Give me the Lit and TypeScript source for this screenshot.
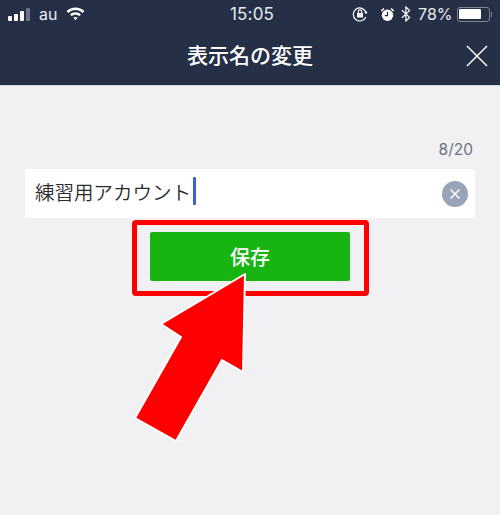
import { LitElement, html, css } from "lit";
import { customElement } from "lit/decorators.js";

@customElement("app-root")
export class AppRoot extends LitElement {
  static styles = css`
    :host {
      display: block;
      position: relative;
      width: 500px;
      height: 515px;
      overflow: hidden;
      background: #f1f1f4;
      font-family: "Inter", "Liberation Sans", "Noto Sans CJK JP", sans-serif;
    }
    .head {
      height: 86px;
      background: #253047;
      color: #fff;
      box-sizing: border-box;
      border-bottom: 1px solid #d5d7de;
    }
    .status {
      height: 28px;
      display: grid;
      grid-template-columns: 1fr auto 1fr;
      align-items: center;
      font-size: 16px;
      color: #e8eaef;
    }
    .left {
      display: flex;
      align-items: center;
      padding-left: 8px;
      gap: 9px;
    }
    .bars {
      display: flex;
      align-items: flex-end;
      gap: 2px;
      height: 13px;
    }
    .bars i {
      display: block;
      width: 4px;
      background: #fff;
      border-radius: 1px;
    }
    .bars i.b1 { height: 5px; }
    .bars i.b2 { height: 7px; }
    .bars i.b3 { height: 10px; }
    .bars i.b4 { height: 13px; background: #6b7384; }
    .time {
      font-size: 17px;
      letter-spacing: 0.2px;
      padding-left: 4px;
    }
    .right {
      display: flex;
      align-items: center;
      justify-content: flex-end;
      padding-right: 8px;
      gap: 5px;
    }
    .right .alarm { margin-left: 7px; }
    .right .bt { margin-left: 1px; }
    .right .pct { font-size: 16px; margin-left: 2px; margin-right: -1px; }
    .battery {
      display: flex;
      align-items: center;
      gap: 1px;
    }
    .battery .shell {
      box-sizing: border-box;
      width: 33px;
      height: 15px;
      border: 1px solid #7d8494;
      border-radius: 3px;
      padding: 1.500px;
      display: flex;
    }
    .battery .fill {
      background: #fff;
      border-radius: 1px;
      height: 100%;
    }
    .battery .cap {
      width: 1.500px;
      height: 5px;
      background: #7d8494;
    }
    .nav {
      position: relative;
      height: 56px;
      display: flex;
      align-items: center;
      justify-content: center;
      font-size: 21px;
      font-weight: 500;
      padding-bottom: 4px;
      box-sizing: border-box;
      font-family: "Noto Sans CJK JP", sans-serif;
    }
    .close {
      position: absolute;
      right: 12px;
      top: 17px;
    }
    .body {
      padding: 53px 25px 0;
    }
    .count {
      text-align: right;
      color: #6e7380;
      font-size: 15.500px;
      line-height: 22px;
      padding-right: 2px;
      height: 30px;
      box-sizing: border-box;
    }
    .field {
      height: 49px;
      background: #fff;
      border-radius: 2px;
      display: flex;
      align-items: center;
      padding: 0 7px 0 10px;
      box-sizing: border-box;
      font-family: "Noto Sans CJK JP", sans-serif;
      font-size: 19.500px;
      font-weight: 350;
      color: #2b2b2b;
    }
    .value { margin-bottom: 4px; }
    .caret {
      width: 2.500px;
      height: 28px;
      background: #3f60c8;
      border-radius: 1px;
      margin-left: 2px;
      margin-bottom: 5px;
    }
    .clear {
      margin-left: auto;
      width: 26px;
      height: 26px;
      border-radius: 50%;
      background: #99a4b8;
      display: flex;
      align-items: center;
      justify-content: center;
    }
    .save {
      margin: 14px auto 0;
      width: 200px;
      height: 49px;
      background: #18b512;
      border-radius: 2px;
      color: #fff;
      display: flex;
      align-items: center;
      justify-content: center;
      font-family: "Noto Sans CJK JP", sans-serif;
      font-size: 20px;
      font-weight: 500;
    }
    .frame {
      position: absolute;
      left: 132px;
      top: 220px;
      width: 237px;
      height: 76px;
      box-sizing: border-box;
      border: 5px solid #fe0000;
      border-radius: 4px;
    }
    .arrow {
      position: absolute;
      left: 0;
      top: 0;
    }
  `;

  render() {
    return html`
      <div class="head">
        <div class="status">
          <div class="left">
            <div class="bars"><i class="b1"></i><i class="b2"></i><i class="b3"></i><i class="b4"></i></div>
            <span>au</span>
            <svg width="19" height="14" viewBox="0 0 19 14">
              <path d="M9.500 0.500C6 0.500 3 1.800 0.600 4.100L2.400 6C4.300 4.200 6.800 3.100 9.500 3.100s5.200 1.100 7.100 2.900l1.800-1.900C16 1.800 13 0.500 9.500 0.500z" fill="#fff"/>
              <path d="M9.500 5.200c-2.100 0-4 .8-5.400 2.200l1.800 1.800c1-.9 2.200-1.400 3.600-1.400s2.600.5 3.600 1.400l1.800-1.800C13.500 6 11.600 5.200 9.500 5.200z" fill="#fff"/>
              <path d="M9.500 10c-.9 0-1.500.3-2.100.8l2.100 2.400 2.100-2.400c-.6-.5-1.200-.8-2.100-.8z" fill="#fff"/>
            </svg>
          </div>
          <div class="time">15:05</div>
          <div class="right">
            <svg width="16" height="16" viewBox="0 0 16 16" fill="none" stroke="#fff">
              <path d="M14 6.500A6.500 6.500 0 1 0 13.800 11" stroke-width="1.200"/>
              <path d="M12.200 5.800h3.400L14 8.200z" fill="#fff" stroke="none"/>
              <rect x="5" y="7" width="6" height="4.600" rx=".6" fill="#fff" stroke="none"/>
              <path d="M6.300 7V5.600a1.700 1.700 0 0 1 3.400 0V7" stroke-width="1.100"/>
            </svg>
            <svg width="15" height="15" viewBox="0 0 15 15" class="alarm">
              <circle cx="7.500" cy="8.300" r="5.700" fill="#fff"/>
              <path d="M7.500 4.800v3.800H4.800" fill="none" stroke="#253047" stroke-width="1.200"/>
              <path d="M.8 3.400L3.400 .9l1 1L1.800 4.400zM14.200 3.400L11.600 .9l-1 1 2.600 2.500z" fill="#fff"/>
            </svg>
            <svg class="bt" width="10" height="16" viewBox="0 0 10 16" fill="none" stroke="#fff" stroke-width="1.200">
              <path d="M1 4.200l7.600 7.200L4.900 15V1l3.700 3.600L1 11.800"/>
            </svg>
            <span class="pct">78%</span>
            <div class="battery">
              <div class="shell"><div class="fill" style="width:78%"></div></div>
              <div class="cap"></div>
            </div>
          </div>
        </div>
        <div class="nav">
          表示名の変更
          <svg class="close" width="22" height="22" viewBox="0 0 22 22" stroke="#fff" stroke-width="1.500">
            <path d="M1 1l20 20M21 1L1 21"/>
          </svg>
        </div>
      </div>
      <div class="body">
        <div class="count">8/20</div>
        <div class="field">
          <span class="value">練習用アカウント</span><span class="caret"></span>
          <span class="clear">
            <svg width="12" height="12" viewBox="0 0 12 12" stroke="#fff" stroke-width="1.500">
              <path d="M1.500 1.500l9 9M10.500 1.500l-9 9"/>
            </svg>
          </span>
        </div>
        <div class="save">保存</div>
      </div>
      <div class="frame"></div>
      <svg class="arrow" width="500" height="515" viewBox="0 0 500 515">
        <path d="M245 274L161 324L181 337L135 418L176 441L222 360L243 372Z" fill="#fe0000" stroke="#fff" stroke-width="2" stroke-linejoin="round"/>
      </svg>
    `;
  }
}
